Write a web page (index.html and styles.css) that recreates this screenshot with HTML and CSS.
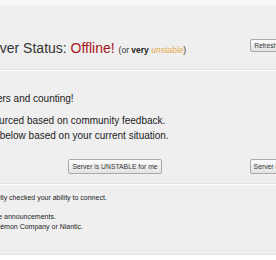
FILE: index.html
```
<!DOCTYPE html>
<html lang="en">
<head>
  <meta charset="UTF-8">
  <meta name="viewport" content="width=device-width, initial-scale=1.0">
  <title>Server Status</title>
  <link rel="stylesheet" href="styles.css">
</head>
<body>
  <div class="topbar"></div>

  <!-- current status -->
  <section class="panel status">
    <div class="inner status-row">
      <h1>Server Status: <span class="offline">Offline!</span> <small>(or <b>very</b> <i class="unstable">unstable</i>)</small></h1>
      <button class="refresh">Refresh</button>
    </div>
  </section>

  <!-- voting -->
  <section class="panel vote">
    <div class="inner">
      <p class="count">2 users and counting!</p>
      <p>Is sourced based on community feedback.<br>vote below based on your current situation.</p>
      <div class="votes">
        <button>Server is DOWN for me</button>
        <button>Server is UNSTABLE for me</button>
        <button>Server is UP for me</button>
      </div>
    </div>
  </section>

  <section class="panel notes">
    <div class="inner">
      <p>Presently checked your ability to connect.</p>
      <p>See the announcements.<br>By Pokémon Company or Niantic.</p>
    </div>
  </section>
</body>
</html>
```

FILE: styles.css
```
body {
  margin: 0;
  background-color: #fff;
  font-family: "Liberation Sans", Arial, sans-serif;
  color: #222;
  overflow: hidden;
}

.topbar {
  height: 5px;
  background-color: #f7f7f7;
}

.panel {
  background-color: #efefef;
  border-bottom: 1px solid #e2e2e2;
  margin-bottom: 1px;
}

/* page is wider than the window, left edge falls off screen */
.inner {
  margin-left: -22px;
  width: 303px;
}

button {
  font-family: "Liberation Sans", Arial, sans-serif;
  font-size: 6.8px;
  color: #333;
  background: linear-gradient(#fbfbfb, #e3e3e3);
  border: 1px solid #a9a9a9;
  border-radius: 2px;
  padding: 3px 3px;
  white-space: nowrap;
  flex-shrink: 0;
}

.status {
  padding: 35px 0 11px;
}

.status-row {
  display: flex;
  justify-content: space-between;
  align-items: flex-start;
}

h1 {
  margin: 0;
  font-size: 14px;
  font-weight: normal;
  line-height: 16px;
  color: #333;
  white-space: nowrap;
}

.offline {
  color: #a8161b;
}

h1 small {
  font-size: 8.5px;
}

h1 b {
  color: #222;
}

.unstable {
  color: #e6a84a;
}

.refresh {
  font-size: 6.5px;
  padding: 2px 3px;
  margin-top: -1px;
}

.vote {
  padding: 20px 0 9px;
}

.vote p {
  margin: 0;
  font-size: 10px;
  line-height: 15px;
}

.vote .count {
  margin-bottom: 7px;
}

.votes {
  display: flex;
  gap: 88px;
  margin: 16px 0 0 -77px;
}

.notes {
  padding: 8px 0 22px;
}

.notes p {
  margin: 0;
  font-size: 7px;
  line-height: 10px;
}

.notes p + p {
  margin-top: 9px;
}
```
